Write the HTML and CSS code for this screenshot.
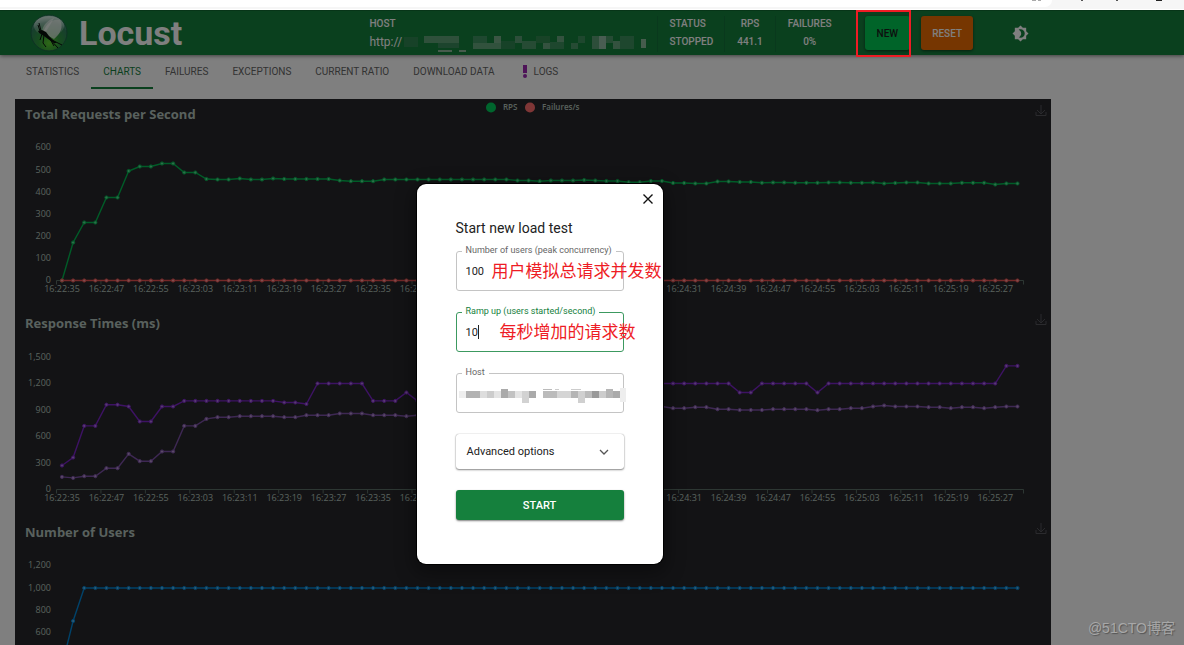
FILE: index.html
```html
<!DOCTYPE html>
<html lang="en">
<head>
<meta charset="utf-8">
<meta name="viewport" content="width=device-width, initial-scale=1">
<title>Locust</title>
<link rel="stylesheet" href="styles.css">
</head>
<body>
<div class="browser-strip">
  <div class="browser-address"></div>
  <svg class="browser-marks" width="132" height="3" viewBox="0 0 132 3" aria-hidden="true">
    <path d="M2 0h4v1h-4zM8 0h3v1H8z" fill="#aaa"/><path d="M51 0h2v1h-2zM86 0h2v1h-2z" fill="#555"/><path d="M126 0h6v1h-6z" fill="#222"/>
  </svg>
</div>
<div class="app">
  <header class="topbar">
    <div class="brand">
      <svg class="brand-logo" viewBox="0 0 38 38" aria-hidden="true">
        <defs>
          <radialGradient id="ball" cx="50%" cy="78%" r="72%">
            <stop offset="0" stop-color="#5fd12f"/><stop offset=".4" stop-color="#2f9a3c"/><stop offset=".8" stop-color="#2f7d5c"/><stop offset="1" stop-color="#78b9a2"/>
          </radialGradient>
          <linearGradient id="shine" x1="0" y1="0" x2="0" y2="1">
            <stop offset="0" stop-color="#fff" stop-opacity=".65"/><stop offset="1" stop-color="#fff" stop-opacity=".08"/>
          </linearGradient>
        </defs>
        <circle cx="19" cy="19" r="18" fill="url(#ball)" stroke="#1c6446"/>
        <ellipse cx="19" cy="12" rx="15" ry="10" fill="url(#shine)"/>
        <path d="M13 19C15 11 22 4 30 6C34 13 30 20 24 25Z" fill="#e9f3ec" opacity=".75"/>
        <path d="M12 17C13 11 18 6 24 4C21 10 17 16 14 20Z" fill="#fff" opacity=".55"/>
        <path d="M8 17l4-1 4 2 3 4 4 4 4 3-3 0-6-4-4-3-5-3z" fill="#07110b"/>
        <path d="M10 17L8 11M11 17L9 9M14 21L13 29L16 33M18 23L28 34M22 26L32 31M12 20L10 26M20 25L24 32" fill="none" stroke="#07110b" stroke-width="1"/>
      </svg>
      <h1 class="brand-name">Locust</h1>
    </div>
    <div class="stats">
      <div class="stat stat-host">
        <span>HOST</span>
        <span class="host-line">http://<svg class="host-mask" id="hostMask" viewBox="0 0 246 18" aria-hidden="true"></svg></span>
      </div>
      <div class="stat"><span>STATUS</span><span>STOPPED</span></div>
      <div class="stat stat-center"><span>RPS</span><span>441.1</span></div>
      <div class="stat stat-center stat-last"><span>FAILURES</span><span>0%</span></div>
    </div>
    <div class="actions">
      <button class="btn btn-new" type="button">NEW</button>
      <button class="btn btn-reset" type="button">RESET</button>
      <button class="theme-toggle" type="button" aria-label="Toggle theme">
        <svg width="17" height="17" viewBox="0 0 24 24"><path fill="#fff" fill-rule="evenodd" d="M20 8.7V4h-4.7L12 .7 8.7 4H4v4.700L.7 12 4 15.300V20h4.700L12 23.300 15.300 20H20v-4.700L23.300 12zM12 18c-.9 0-1.750-.200-2.500-.550C11.600 16.500 13 14.400 13 12s-1.400-4.500-3.500-5.450C10.250 6.200 11.100 6 12 6c3.300 0 6 2.700 6 6s-2.700 6-6 6z"/></svg>
      </button>
    </div>
  </header>

  <nav class="tabs">
    <a class="tab" href="#statistics">STATISTICS</a>
    <a class="tab tab-active" href="#charts">CHARTS</a>
    <a class="tab" href="#failures">FAILURES</a>
    <a class="tab" href="#exceptions">EXCEPTIONS</a>
    <a class="tab" href="#ratio">CURRENT RATIO</a>
    <a class="tab" href="#download">DOWNLOAD DATA</a>
    <a class="tab" href="#logs"><svg class="tab-alert" width="4" height="13" viewBox="0 0 4 13" aria-hidden="true"><path d="M0 0h4v8H0z"/><circle cx="2" cy="11" r="2"/></svg>LOGS</a>
  </nav>

  <main class="charts" id="charts"></main>
</div>

<div class="backdrop">
  <section class="dialog" role="dialog" aria-labelledby="dialogTitle">
    <button class="dialog-close" type="button" aria-label="Close">
      <svg width="10" height="10" viewBox="0 0 10 10"><path d="M.5.5l9 9M9.500.5l-9 9" stroke="#111" stroke-width="1.400" fill="none"/></svg>
    </button>
    <h2 class="dialog-title" id="dialogTitle">Start new load test</h2>
    <form class="form">
      <div class="field">
        <label class="field-label" for="users">Number of users (peak concurrency)</label>
        <input class="field-input" id="users" type="text" value="100">
        <span class="note note-users">用户模拟总请求并发数</span>
      </div>
      <div class="field field-focus">
        <label class="field-label" for="ramp">Ramp up (users started/second)</label>
        <input class="field-input" id="ramp" type="text" value="10">
        <span class="caret"></span>
        <span class="note note-ramp">每秒增加的请求数</span>
      </div>
      <div class="field">
        <label class="field-label" for="host">Host</label>
        <input class="field-input" id="host" type="text">
        <svg class="field-mask" id="fieldMask" viewBox="0 0 168 18" aria-hidden="true"></svg>
      </div>
      <button class="advanced" type="button">Advanced options
        <svg width="10" height="6" viewBox="0 0 10 6" aria-hidden="true"><path d="M1 1l4 4 4-4" fill="none" stroke="#555" stroke-width="1.300"/></svg>
      </button>
      <button class="start" type="button">START</button>
    </form>
  </section>
</div>
<div class="marker"></div>
<div class="watermark">@51CTO博客</div>
<script src="charts.js"></script>
</body>
</html>
```
FILE: styles.css
```css
* { box-sizing: border-box; }
body {
  margin: 0;
  height: 100vh;
  overflow: hidden;
  position: relative;
  background: #fff;
  font-family: Roboto, "Liberation Sans", sans-serif;
  color: #222;
}
button { font-family: inherit; cursor: pointer; }

.browser-strip {
  height: 10px;
  background: #f6f6f6;
  border-bottom: 1px solid #fff;
  position: relative;
}
.browser-address {
  height: 7px;
  margin-right: 132px;
  background: #fff;
  border-radius: 0 0 12px 0;
}
.browser-marks { position: absolute; right: 0; top: 0; margin-right: 22px; }

.app { height: calc(100vh - 10px); overflow: hidden; background: #fff; }

.topbar {
  display: flex;
  align-items: center;
  height: 45px;
  padding: 0 155px 0 30px;
  background: #15803d;
  border-top: 1px solid #0f6b31;
  box-shadow: 0 1px 4px rgba(0, 0, 0, .5);
  position: relative;
  color: #fff;
}
.brand { display: flex; align-items: center; gap: 11px; }
.brand-logo { width: 38px; height: 38px; }
.brand-name { margin: 0; font-size: 34px; line-height: 40px; font-weight: 700; }
.stats { display: flex; margin-left: auto; padding-top: 2px; }
.stat {
  display: flex;
  flex-direction: column;
  gap: 2px;
  padding: 0 11px;
  border-right: 1px solid #12723a;
  font-size: 10px;
  line-height: 16px;
  font-weight: 500;
}
.stat-host { width: 300px; }
.host-line { display: flex; font-size: 12px; font-weight: 400; white-space: nowrap; }
.host-mask { width: 246px; height: 18px; flex: none; }
.stat-center { align-items: center; padding: 0 12px; }
.stat-last { border-right: 0; padding-right: 33px; }
.actions { display: flex; align-items: center; }
.btn {
  height: 34px;
  padding: 0 11px;
  border: 0;
  border-radius: 3px;
  font-size: 10px;
  font-weight: 500;
  box-shadow: 0 1px 3px rgba(0, 0, 0, .5);
}
.btn-new { padding: 0 12px; background: #00c853; color: #1c1c1c; }
.btn-reset { background: #ed6c02; color: #fff; margin-left: 11px; }
.theme-toggle { display: flex; margin-left: 39px; padding: 0; border: 0; background: none; }

.tabs { display: flex; padding-left: 14px; }
.tab {
  display: flex;
  align-items: center;
  gap: 7px;
  height: 34px;
  padding: 0 12px;
  border-bottom: 2px solid transparent;
  font-size: 10px;
  color: #666;
  text-decoration: none;
  white-space: nowrap;
}
.tab-active { color: #15803d; border-color: #15803d; }
.tab-alert { fill: #9c27b0; margin-left: 4px; }

.charts { margin: 10px 133px 0 15px; background: #27272a; }
.chart { display: block; width: 100%; height: auto; }
.chart text { font-family: "Open Sans", "Noto Sans", sans-serif; fill: #b3c3bc; }
.chart .chart-title { font-size: 13px; font-weight: 700; }
.chart .axis-text { font-size: 9px; }
.chart .legend-text { font-size: 8px; font-weight: 600; }
.axis-line { stroke: #5b6f66; fill: none; }
.save-icon { stroke: #55555a; fill: none; }

.backdrop {
  position: absolute;
  inset: 10px 0 0;
  display: flex;
  justify-content: center;
  align-items: flex-start;
  padding: 174px 105px 0 0;
  background: rgba(0, 0, 0, .5);
}
.dialog {
  position: relative;
  width: 246px;
  padding: 34px 39px 44px;
  border-radius: 9px;
  background: #fff;
  box-shadow: 0 0 0 1px #000, 0 6px 18px 4px rgba(0, 0, 0, .35);
}
.dialog-close {
  position: absolute;
  top: 10px;
  right: 10px;
  display: flex;
  padding: 0;
  border: 0;
  background: none;
}
.dialog-title { margin: 0 0 13px; font-size: 14px; line-height: 20px; font-weight: 400; }
.form { display: flex; flex-direction: column; gap: 21px; }
.field { position: relative; height: 40px; }
.field-label {
  position: absolute;
  top: -6px;
  left: 6px;
  padding: 0 4px;
  background: #fff;
  font-size: 9px;
  line-height: 11px;
  color: #666;
  white-space: nowrap;
}
.field-input {
  width: 100%;
  height: 40px;
  padding: 0 9px;
  border: 1px solid #c4c4c4;
  border-radius: 3px;
  background: #fff;
  font-family: inherit;
  font-size: 11px;
  color: #222;
}
.field-focus .field-label { color: #15803d; }
.field-focus .field-input { border-color: #3c9960; }
.caret { position: absolute; left: 22px; top: 13px; width: 1px; height: 14px; background: #222; }
.note {
  position: absolute;
  top: 9px;
  font-family: "Liberation Sans", "Noto Sans CJK SC", sans-serif;
  font-size: 17px;
  line-height: 24px;
  color: #ee1c25;
  white-space: nowrap;
}
.note-users { left: 36px; }
.note-ramp { left: 44px; }
.field-mask { position: absolute; left: 3px; top: 14px; width: 168px; height: 18px; }
.advanced {
  display: flex;
  align-items: center;
  justify-content: space-between;
  height: 35px;
  padding: 0 15px 0 11px;
  border: 0;
  border-radius: 3px;
  background: #fff;
  box-shadow: 0 1px 2px rgba(0, 0, 0, .45), 0 0 1px rgba(0, 0, 0, .4);
  font-size: 11px;
  color: #222;
}
.start {
  height: 30px;
  border: 0;
  border-radius: 3px;
  background: #15803d;
  color: #fff;
  font-size: 11px;
  font-weight: 500;
  box-shadow: 0 1px 2px rgba(0, 0, 0, .5);
}

.marker {
  position: absolute;
  top: 10px;
  right: 273px;
  width: 55px;
  height: 47px;
  border: 2px solid #ee1c25;
}
.watermark {
  position: absolute;
  right: 9px;
  bottom: 7px;
  font-family: "Liberation Sans", "Noto Sans CJK SC", sans-serif;
  font-size: 14px;
  line-height: 20px;
  color: #a8a8a8;
  text-shadow: 1px 1px 1px #555;
}
```
FILE: charts.js
```js
// Series are run-length lists: [height on the plot, number of samples].
const STEP = 11.11;
const FIRST = 47;
const TIMES = ['16:22:35', '16:22:47', '16:22:55', '16:23:03', '16:23:11', '16:23:19', '16:23:27', '16:23:35',
  '16:23:43', '16:23:51', '16:23:59', '16:24:07', '16:24:15', '16:24:23', '16:24:31', '16:24:39', '16:24:47',
  '16:24:55', '16:25:03', '16:25:11', '16:25:19', '16:25:27'];

const charts = [
  {
    title: 'Total Requests per Second', ticks: ['600', '500', '400', '300', '200', '100', '0'], gap: 22.1,
    legend: [['RPS', '#00ca5a', 476], ['Failures/s', '#ff6d6d', 515]],
    series: [
      { line: '#00b850', dot: '#5fd893', runs: [[0, 1], [38, 1], [58, 2], [83, 2], [109.5, 1], [114, 2], [117, 2], [108, 2], [101.5, 1], [101, 2], [102, 1], [101, 2], [102, 1], [101.5, 5], [100, 1], [99.3, 3], [101, 12], [100, 2], [99.3, 1], [100, 3], [100.5, 1], [100, 1], [99.5, 2], [98.3, 2], [99.5, 2], [97.5, 2], [97, 2], [99, 2], [98.5, 2], [97.7, 1], [98, 2], [97.7, 3], [98, 2], [97.7, 2], [98, 1], [97, 1], [97.5, 1], [98, 2], [97, 3], [97.7, 3], [96, 1], [97, 2]] },
      { line: '#e85050', dot: '#ff9c9c', runs: [[0, 87]] }
    ]
  },
  {
    title: 'Response Times (ms)', ticks: ['1,500', '1,200', '900', '600', '300', '0'], gap: 26.5,
    series: [
      { line: '#7a24c8', dot: '#b078e0', runs: [[24, 1], [32, 1], [63.6, 2], [84.8, 2], [83, 1], [68, 2], [83, 2], [88.6, 9], [87, 2], [85.5, 1], [106, 5], [88.6, 3], [97, 1], [88.6, 1], [106, 28], [97, 2], [106, 5], [97, 1], [106, 16], [123.6, 2]] },
      { line: '#7c50a8', dot: '#b494cc', runs: [[12.6, 1], [11.6, 1], [13.3, 2], [21.3, 2], [35.6, 1], [28.3, 2], [38, 2], [63.6, 2], [70.6, 1], [72.3, 2], [73.3, 4], [72.3, 2], [74.3, 3], [76, 3], [74.3, 3], [73.3, 1], [74.3, 8], [80, 10], [83, 5], [81.3, 2], [82.3, 2], [80.3, 2], [79.5, 3], [80.3, 4], [79.3, 1], [80.3, 2], [81.3, 2], [83, 1], [84, 1], [83, 3], [82.3, 2], [81.3, 1], [82.3, 2], [81.3, 1], [82.3, 1], [83, 2]] }
    ]
  },
  {
    title: 'Number of Users', ticks: ['1,200', '1,000', '800', '600', '400', '200', '0'], gap: 22.1,
    series: [{ line: '#0084d4', dot: '#5ab2e6', runs: [[33, 1], [77.5, 1], [110.5, 85]] }]
  }
];

function drawChart(c) {
  const base = 181.5;
  let s = `<text class="chart-title" x="10" y="20">${c.title}</text>`;
  (c.legend || []).forEach(([name, color, x]) => {
    s += `<circle cx="${x}" cy="8.500" r="5" fill="${color}"/><text class="legend-text" x="${x + 12}" y="11">${name}</text>`;
  });
  s += '<path class="save-icon" d="M1026 6v9M1022 11l4 4 4-4M1021 13v3.500h10V13"/>';
  c.ticks.forEach((t, i) => {
    const y = base - (c.ticks.length - 1 - i) * c.gap + 2.5;
    s += `<text class="axis-text" x="36" y="${y}" text-anchor="end">${t}</text>`;
  });
  let axis = `M41.500 ${base}H1008.500`;
  for (let i = 0; i < 22; i++) axis += `M${41.5 + i * STEP * 4} ${base}v4`;
  axis += `M1008.500 ${base}v4`;
  s += `<path class="axis-line" d="${axis}"/>`;
  TIMES.forEach((t, i) => {
    s += `<text class="axis-text" x="${FIRST + i * STEP * 4}" y="193" text-anchor="middle">${t}</text>`;
  });
  c.series.forEach(({ line, dot, runs }) => {
    const points = runs.flatMap(([v, n]) => Array(n).fill(v)).map((v, i) => [FIRST + i * STEP, base - v]);
    s += `<polyline points="${points.join(' ')}" fill="none" stroke="${line}" stroke-width="1.400"/>`;
    points.forEach(([x, y]) => {
      s += `<circle cx="${x}" cy="${y}" r="1.600" fill="${dot}" stroke="${line}"/>`;
    });
  });
  return `<svg class="chart" viewBox="0 0 1036 209" role="img" aria-label="${c.title}">${s}</svg>`;
}
document.getElementById('charts').innerHTML = charts.map(drawChart).join('');

// Pixelated cover over the private host name: [x, y, width, height, colour].
function mosaic(id, cells) {
  document.getElementById(id).innerHTML = cells
    .map(([x, y, w, h, f]) => `<rect x="${x}" y="${y}" width="${w}" height="${h}" fill="${f}"/>`).join('');
}
mosaic('hostMask', [
  [2, 3, 14, 10, '#2f8550'], [22, 2, 35, 7, '#5fa077'], [36, 9, 21, 5, '#38895a'], [36, 16, 14, 2, '#8fb69b'], [57, 16, 7, 2, '#8fb69b'],
  [71, 2, 14, 7, '#3f9160'], [71, 9, 28, 6, '#63a47a'], [92, 2, 7, 7, '#77ac88'], [99, 7, 14, 8, '#2f8550'], [113, 2, 7, 7, '#5b9d74'],
  [120, 7, 14, 8, '#4d9668'], [134, 2, 14, 7, '#31864f'], [141, 9, 7, 6, '#68a57e'], [155, 2, 7, 7, '#68a57e'], [148, 8, 14, 7, '#3d8e5c'],
  [169, 9, 7, 6, '#4c9769'], [176, 2, 7, 7, '#3d8e5c'], [190, 2, 7, 13, '#5b9d74'], [197, 2, 7, 13, '#93bba4'], [204, 2, 7, 7, '#4c9769'],
  [211, 7, 7, 8, '#68a57e'], [218, 2, 14, 13, '#3d8e5c'], [239, 5, 5, 9, '#8cb99b']
]);
mosaic('fieldMask', [
  [0, 4, 7, 7, '#eee'], [7, 4, 14, 7, '#b2b2b2'], [21, 4, 7, 7, '#ddd'], [28, 4, 7, 7, '#ccc'], [35, 4, 7, 7, '#e4e4e4'], [42, 2, 7, 9, '#aaa'],
  [49, 4, 7, 7, '#c2c2c2'], [56, 4, 7, 7, '#e4e4e4'], [63, 4, 7, 12, '#d2d2d2'], [70, 4, 7, 7, '#aaa'], [84, 4, 14, 7, '#bbb'],
  [84, 2, 9, 1, '#bbb'], [96, 2, 4, 1, '#ccc'], [98, 4, 14, 7, '#d5d5d5'], [112, 4, 7, 7, '#b5b5b5'], [112, 2, 10, 1, '#ccc'], [119, 4, 7, 12, '#d0d0d0'],
  [126, 4, 7, 7, '#bbb'], [133, 4, 7, 7, '#999'], [140, 4, 7, 7, '#ccc'], [147, 2, 7, 9, '#b5b5b5'], [154, 4, 7, 7, '#aaa'], [161, 1, 6, 14, '#eee']
]);
```
